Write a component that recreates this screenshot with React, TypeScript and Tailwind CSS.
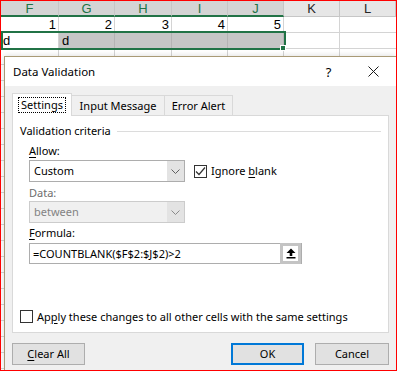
import React from "react";

const sheetCols = [
  { name: "F", sel: true },
  { name: "G", sel: true },
  { name: "H", sel: true },
  { name: "I", sel: true },
  { name: "J", sel: true },
  { name: "K", sel: false },
  { name: "L", sel: false },
];

const emptyRows = Array.from({ length: 20 });

function Chevron({ color = "#5f5f5f" }: { color?: string }) {
  return (
    <svg width="9" height="5" viewBox="0 0 9 5">
      <path d="M0.5 0.5 L4.5 4.5 L8.5 0.5" fill="none" stroke={color} strokeWidth="1" />
    </svg>
  );
}

function Select({ value, disabled }: { value: string; disabled?: boolean }) {
  return (
    <div
      className={`flex h-[22px] w-[156px] border ${
        disabled ? "border-[#cccccc] bg-[#f0f0f0] text-[#838383]" : "border-[#adadad] bg-white text-black"
      }`}
    >
      <div className="flex flex-1 items-center pl-[4px]">{value}</div>
      <div className="flex w-[17px] items-center justify-center bg-[#e3e3e3]">
        <Chevron color={disabled ? "#8a8a8a" : "#5f5f5f"} />
      </div>
    </div>
  );
}

function Checkbox({ checked }: { checked?: boolean }) {
  return (
    <div className="flex h-[13px] w-[13px] items-center justify-center border border-[#333333] bg-white">
      {checked && (
        <svg width="11" height="11" viewBox="0 0 11 11">
          <path d="M1 5.5 L4 8.5 L10 1.5" fill="none" stroke="#333333" strokeWidth="1.2" />
        </svg>
      )}
    </div>
  );
}

function U({ children }: { children: React.ReactNode }) {
  return <span className="underline decoration-1 underline-offset-2">{children}</span>;
}

function Sheet() {
  return (
    <div className="grid grid-cols-[58px_56px_57px_56px_56px_56px_1fr] font-['Liberation_Sans',Arial,sans-serif] text-[13px] leading-none">
      {sheetCols.map((c) => (
        <div
          key={c.name}
          className={`flex h-4 items-center justify-center border-r border-[#c6c6c6] ${
            c.sel
              ? "border-b-2 border-b-[#217346] bg-[#d4d4d4] text-[#217346]"
              : "border-b border-b-[#c6c6c6] bg-[#e6e6e6] text-[#262626]"
          }`}
        >
          {c.name}
        </div>
      ))}
      {[1, 2, 3, 4, 5].map((n) => (
        <div key={n} className="flex h-4 items-center justify-end border-r border-b border-[#d4d4d4] pr-[2px]">
          {n}
        </div>
      ))}
      <div className="h-4 border-r border-b border-[#d4d4d4]" />
      <div className="h-4 border-b border-[#d4d4d4]" />
      <div className="flex h-4 items-center border-r border-b border-[#d4d4d4] pl-[2px]">d</div>
      <div className="flex h-4 items-center border-r border-b border-[#b4b4b4] bg-[#c6c6c6] pl-[3px]">d</div>
      <div className="h-4 border-r border-b border-[#b4b4b4] bg-[#c6c6c6]" />
      <div className="h-4 border-r border-b border-[#b4b4b4] bg-[#c6c6c6]" />
      <div className="h-4 border-r border-b border-[#b4b4b4] bg-[#c6c6c6]" />
      <div className="h-4 border-r border-b border-[#d4d4d4]" />
      <div className="h-4 border-b border-[#d4d4d4]" />
      {emptyRows.map((_, r) =>
        sheetCols.map((c, i) => (
          <div
            key={`${r}-${c.name}`}
            className={`h-4 border-b border-[#d4d4d4] ${i < 6 ? "border-r" : ""}`}
          />
        ))
      )}
    </div>
  );
}

function Dialog() {
  return (
    <div className="absolute top-[55px] right-0 bottom-0 left-[3px] flex flex-col border-t border-l border-[#a99a76] font-['Noto_Sans',sans-serif] text-[11px] leading-[14px] text-black shadow-[0_0_6px_rgba(0,0,0,0.15)]">
      <div className="flex h-[29px] items-center bg-white pl-[8px]">
        <span className="text-[11.5px]">Data Validation</span>
        <div className="ml-auto flex h-full">
          <div className="flex w-[45px] items-center justify-center text-[13px]">?</div>
          <div className="flex w-[45px] items-center justify-center">
            <svg width="11" height="11" viewBox="0 0 11 11">
              <path d="M0.5 0.5 L10.5 10.5 M10.5 0.5 L0.5 10.5" stroke="#1a1a1a" strokeWidth="1" />
            </svg>
          </div>
        </div>
      </div>

      <div className="flex-1 bg-[#f0f0f0] px-[7px] pt-[7px]">
        <div className="flex h-[22px] items-end">
          <div className="relative z-10 -mb-px flex h-[23px] w-[60px] items-center justify-center border border-b-0 border-[#d9d9d9] bg-white">
            <span className="px-[2px] outline outline-1 outline-dotted outline-black">Settings</span>
          </div>
          <div className="flex h-[20px] w-[93px] items-center justify-center border border-b-0 border-l-0 border-[#d9d9d9]">
            Input Message
          </div>
          <div className="flex h-[20px] w-[68px] items-center justify-center border border-b-0 border-l-0 border-[#d9d9d9]">
            Error Alert
          </div>
        </div>

        <div className="h-[218px] border border-[#d9d9d9] bg-white px-[7px] pt-[8px]">
          <div className="flex h-[14px] items-center">
            <span>Validation criteria</span>
            <div className="ml-[6px] h-px flex-1 bg-[#dcdcdc]" />
          </div>

          <div className="pl-[9px]">
            <div className="mt-[6px] h-[14px]">
              <U>A</U>llow:
            </div>
            <div className="mt-[2px] flex h-[22px] items-center">
              <Select value="Custom" />
              <div className="ml-[9px] flex items-center gap-[4px]">
                <Checkbox checked />
                <span>
                  Ignore <U>b</U>lank
                </span>
              </div>
            </div>
            <div className="mt-[4px] h-[14px] text-[#6d6d6d]">Data:</div>
            <div className="mt-[1px]">
              <Select value="between" disabled />
            </div>
            <div className="mt-[3px] h-[14px]">
              <U>F</U>ormula:
            </div>
            <div className="mt-[3px] flex h-[21px] w-[273px] border border-[#adadad] bg-white">
              <div className="flex flex-1 items-center pl-[3px]">=COUNTBLANK($F$2:$J$2)&gt;2</div>
              <div className="-my-px flex w-[21px] items-center justify-center border-[3px] border-[#c4c4c4] bg-white">
                <svg width="10" height="11" viewBox="0 0 10 11">
                  <path d="M5 0.5 L9.5 5 L6.3 5 L6.3 8 L3.7 8 L3.7 5 L0.5 5 Z" fill="#000" />
                  <rect x="0.5" y="9" width="9" height="1.5" fill="#000" />
                </svg>
              </div>
            </div>
          </div>

          <div className="mt-[46px] flex h-[13px] items-center gap-[4px]">
            <Checkbox />
            <span>
              Ap<U>p</U>ly these changes to all other cells with the same settings
            </span>
          </div>
        </div>

        <div className="mt-[10px] flex h-[22px]">
          <button className="flex w-[73px] items-center justify-center border border-[#adadad] bg-[#e1e1e1]">
            <span>
              <U>C</U>lear All
            </span>
          </button>
          <button className="ml-auto flex w-[73px] items-center justify-center border-2 border-[#0078d7] bg-[#e1e1e1]">
            OK
          </button>
          <button className="ml-[11px] flex w-[74px] items-center justify-center border border-[#adadad] bg-[#e1e1e1]">
            Cancel
          </button>
        </div>
      </div>
    </div>
  );
}

export default function App() {
  return (
    <div className="relative h-[371px] w-[397px] overflow-hidden border border-[#ff0000] bg-white">
      <Sheet />
      <div className="pointer-events-none absolute top-[30px] left-0 h-[19px] w-[285px] border-2 border-[#217346]" />
      <div className="absolute top-[44px] left-[279px] h-[6px] w-[6px] border border-white bg-[#217346]" />
      <Dialog />
    </div>
  );
}
